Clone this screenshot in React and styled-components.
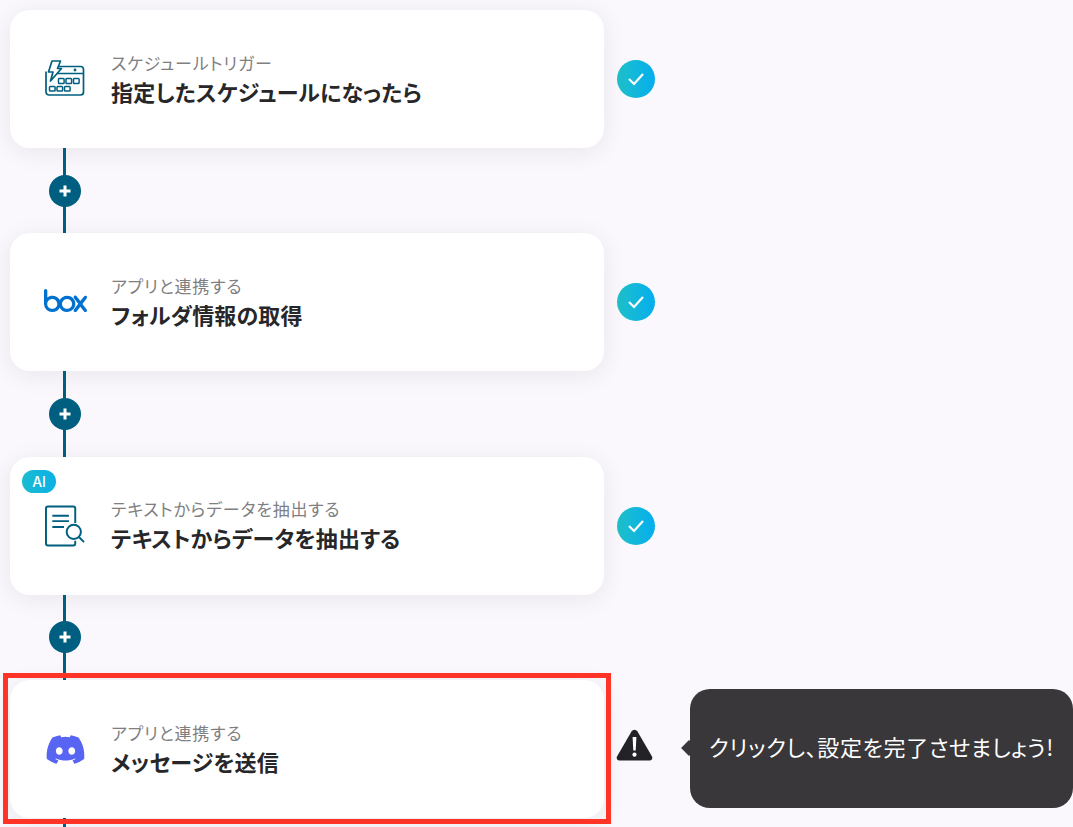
import React from "react";
import styled, { createGlobalStyle } from "styled-components";
import { FaDiscord } from "react-icons/fa";
import { SiBox } from "react-icons/si";

const GlobalStyle = createGlobalStyle`
  html, body {
    margin: 0;
    padding: 0;
    background: #faf8fc;
    overflow: hidden;
  }
  body {
    font-family: "Noto Sans CJK JP", "Noto Sans", sans-serif;
  }
`;

const steps = [
  {
    id: 1,
    icon: "schedule",
    label: "スケジュールトリガー",
    title: "指定したスケジュールになったら",
  },
  { id: 2, icon: "box", label: "アプリと連携する", title: "フォルダ情報の取得" },
  {
    id: 3,
    icon: "extract",
    ai: true,
    label: "テキストからデータを抽出する",
    title: "テキストからデータを抽出する",
  },
  {
    id: 4,
    icon: "discord",
    pending: true,
    label: "アプリと連携する",
    title: "メッセージを送信",
  },
];

function ScheduleIcon() {
  return (
    <svg width="40" height="38" viewBox="0 0 40 38" fill="none" stroke="#005f80" strokeWidth="1.700">
      <path d="M14 6.500h21.500a3 3 0 0 1 3 3v22.500a3 3 0 0 1-3 3H4a3 3 0 0 1-3-3V14" />
      <path d="M1 14v-2.500M10 13.500h28.500" />
      <circle cx="30" cy="10" r="0.6" fill="#005f80" />
      <path d="M7 1h8.500l-3 7.500h4L5.500 21l2.500-9H3.500z" fill="#fff" strokeLinejoin="round" />
      <rect x="13.500" y="18.500" width="5.600" height="5" rx="0.8" strokeWidth="1.500" />
      <rect x="21" y="18.500" width="5.600" height="5" rx="0.8" strokeWidth="1.500" />
      <rect x="28.500" y="18.500" width="5.600" height="5" rx="0.8" strokeWidth="1.500" />
      <rect x="4.500" y="26.500" width="5.600" height="4.500" rx="0.8" strokeWidth="1.500" />
      <rect x="12" y="26.500" width="5.600" height="4.500" rx="0.8" strokeWidth="1.500" />
      <rect x="19.500" y="26.500" width="5.600" height="4.500" rx="0.8" strokeWidth="1.500" />
    </svg>
  );
}

function ExtractIcon() {
  return (
    <svg width="41" height="42" viewBox="0 0 41 42" fill="none" stroke="#005f80" strokeWidth="2">
      <path d="M31 18V3a2 2 0 0 0-2-2H3a2 2 0 0 0-2 2v36a2 2 0 0 0 2 2h26a2 2 0 0 0 2-2v-3" />
      <path d="M7.500 10.500h17M7.500 16h17M7.500 22h12" />
      <circle cx="29.500" cy="27" r="7.300" fill="#fff" />
      <path d="M35 32.500l5 5" />
    </svg>
  );
}

function CheckBadge() {
  return (
    <Badge>
      <svg width="18" height="14" viewBox="0 0 18 14" fill="none" stroke="#fff" strokeWidth="2.200">
        <path d="M2 7l5 5 9-10" />
      </svg>
    </Badge>
  );
}

function WarningIcon() {
  return (
    <WarningSvg width="37" height="32" viewBox="0 0 37 32">
      <path
        d="M15.500 2.500a3.500 3.500 0 0 1 6 0l14.500 25a2.800 2.800 0 0 1-2.500 4h-30a2.800 2.800 0 0 1-2.500-4z"
        fill="#232226"
      />
      <path d="M16.600 8h3.800l-.7 13.500h-2.400z" fill="#fff" />
      <circle cx="18.500" cy="25.700" r="2.100" fill="#fff" />
    </WarningSvg>
  );
}

function StepIcon({ type }) {
  if (type === "schedule") return <ScheduleIcon />;
  if (type === "extract") return <ExtractIcon />;
  if (type === "box") return <BoxLogo />;
  return <DiscordLogo />;
}

export default function App() {
  return (
    <Page>
      <GlobalStyle />
      {steps.map((step, i) => (
        <React.Fragment key={step.id}>
          {i > 0 && (
            <Connector>
              <PlusButton>
                <svg width="14" height="14" viewBox="0 0 14 14" stroke="#fff" strokeWidth="3">
                  <path d="M7 1.500v11M1.500 7h11" />
                </svg>
              </PlusButton>
            </Connector>
          )}
          <Row>
            <Card $active={step.pending}>
              {step.ai && <AiTag>AI</AiTag>}
              <IconSlot>
                <StepIcon type={step.icon} />
              </IconSlot>
              <CardText>
                <Label>{step.label}</Label>
                <Title>{step.title}</Title>
              </CardText>
            </Card>
            {step.pending ? (
              <>
                <Status>
                  <WarningIcon />
                </Status>
                <Tooltip>クリックし、設定を完了させましょう!</Tooltip>
              </>
            ) : (
              <Status>
                <CheckBadge />
              </Status>
            )}
          </Row>
        </React.Fragment>
      ))}
      <Tail />
    </Page>
  );
}

const Page = styled.div`
  width: 1073px;
  height: 827px;
  padding: 10px 0 0 10px;
  box-sizing: border-box;
  background: #faf8fc;
  overflow: hidden;
`;

const Row = styled.div`
  display: flex;
  align-items: center;
  height: 138px;
`;

const Card = styled.div`
  position: relative;
  width: 594px;
  height: 138px;
  flex: none;
  display: flex;
  align-items: center;
  box-sizing: border-box;
  padding-left: 35px;
  border-radius: 20px;
  background: #fff;
  box-shadow: 0 4px 24px rgba(40, 30, 70, 0.08);

  &::after {
    content: "";
    display: ${(p) => (p.$active ? "block" : "none")};
    position: absolute;
    top: -7px;
    bottom: -6px;
    left: -7px;
    right: -7px;
    border: 5px solid #ff3326;
    pointer-events: none;
  }
`;

const IconSlot = styled.div`
  width: 40px;
  height: 44px;
  flex: none;
  display: flex;
  align-items: center;
  justify-content: center;
`;

const BoxLogo = styled(SiBox)`
  width: 43px;
  height: 43px;
  margin-bottom: 3px;
  color: #0071cf;
  flex: none;
`;

const DiscordLogo = styled(FaDiscord)`
  width: 41px;
  height: 41px;
  color: #5865f2;
  flex: none;
`;

const CardText = styled.div`
  margin: 0 0 3px 26px;
  display: flex;
  flex-direction: column;
  font-feature-settings: "palt";
`;

const Label = styled.div`
  font-size: 17px;
  line-height: 26px;
  color: #7f7f82;
  letter-spacing: 0.8px;
`;

const Title = styled.div`
  font-size: 22px;
  line-height: 30px;
  font-weight: 700;
  color: #27272a;
  letter-spacing: 0.15px;
`;

const AiTag = styled.div`
  position: absolute;
  left: 12px;
  top: 13px;
  width: 34px;
  height: 23px;
  border-radius: 12px;
  background: linear-gradient(90deg, #1bbcd0, #0cb0e6);
  color: #fff;
  font-family: "Inter", sans-serif;
  font-size: 14px;
  font-weight: 500;
  line-height: 23px;
  text-align: center;
`;

const Status = styled.div`
  width: 38px;
  margin-left: 13px;
  flex: none;
  display: flex;
  justify-content: center;
`;

const WarningSvg = styled.svg`
  flex: none;
  margin: 0 4px 8px 0;
`;

const Badge = styled.div`
  width: 38px;
  height: 38px;
  border-radius: 50%;
  background: linear-gradient(90deg, #1fc0c8, #04aeee);
  display: flex;
  align-items: center;
  justify-content: center;
`;

const Tooltip = styled.div`
  position: relative;
  flex: none;
  margin: 0 0 2px 35px;
  width: 383px;
  height: 119px;
  box-sizing: border-box;
  padding: 0 0 4px 19px;
  border-radius: 20px;
  background: #39373a;
  color: #fff;
  font-size: 22px;
  letter-spacing: 0.65px;
  font-feature-settings: "palt";
  display: flex;
  align-items: center;
  white-space: nowrap;

  &::before {
    content: "";
    position: absolute;
    left: -8px;
    top: 50%;
    width: 14px;
    height: 14px;
    background: #39373a;
    transform: translateY(-50%) rotate(45deg) scale(0.8);
  }
`;

const Connector = styled.div`
  position: relative;
  width: 3px;
  height: 85.4px;
  margin-left: 53px;
  background: #005f80;
`;

const PlusButton = styled.div`
  position: absolute;
  left: 50%;
  top: 50%;
  width: 32px;
  height: 32px;
  border-radius: 50%;
  background: #005f80;
  transform: translate(-50%, -50%);
  display: flex;
  align-items: center;
  justify-content: center;
`;

const Tail = styled.div`
  width: 3px;
  height: 30px;
  margin-left: 53px;
  background: #005f80;
`;
